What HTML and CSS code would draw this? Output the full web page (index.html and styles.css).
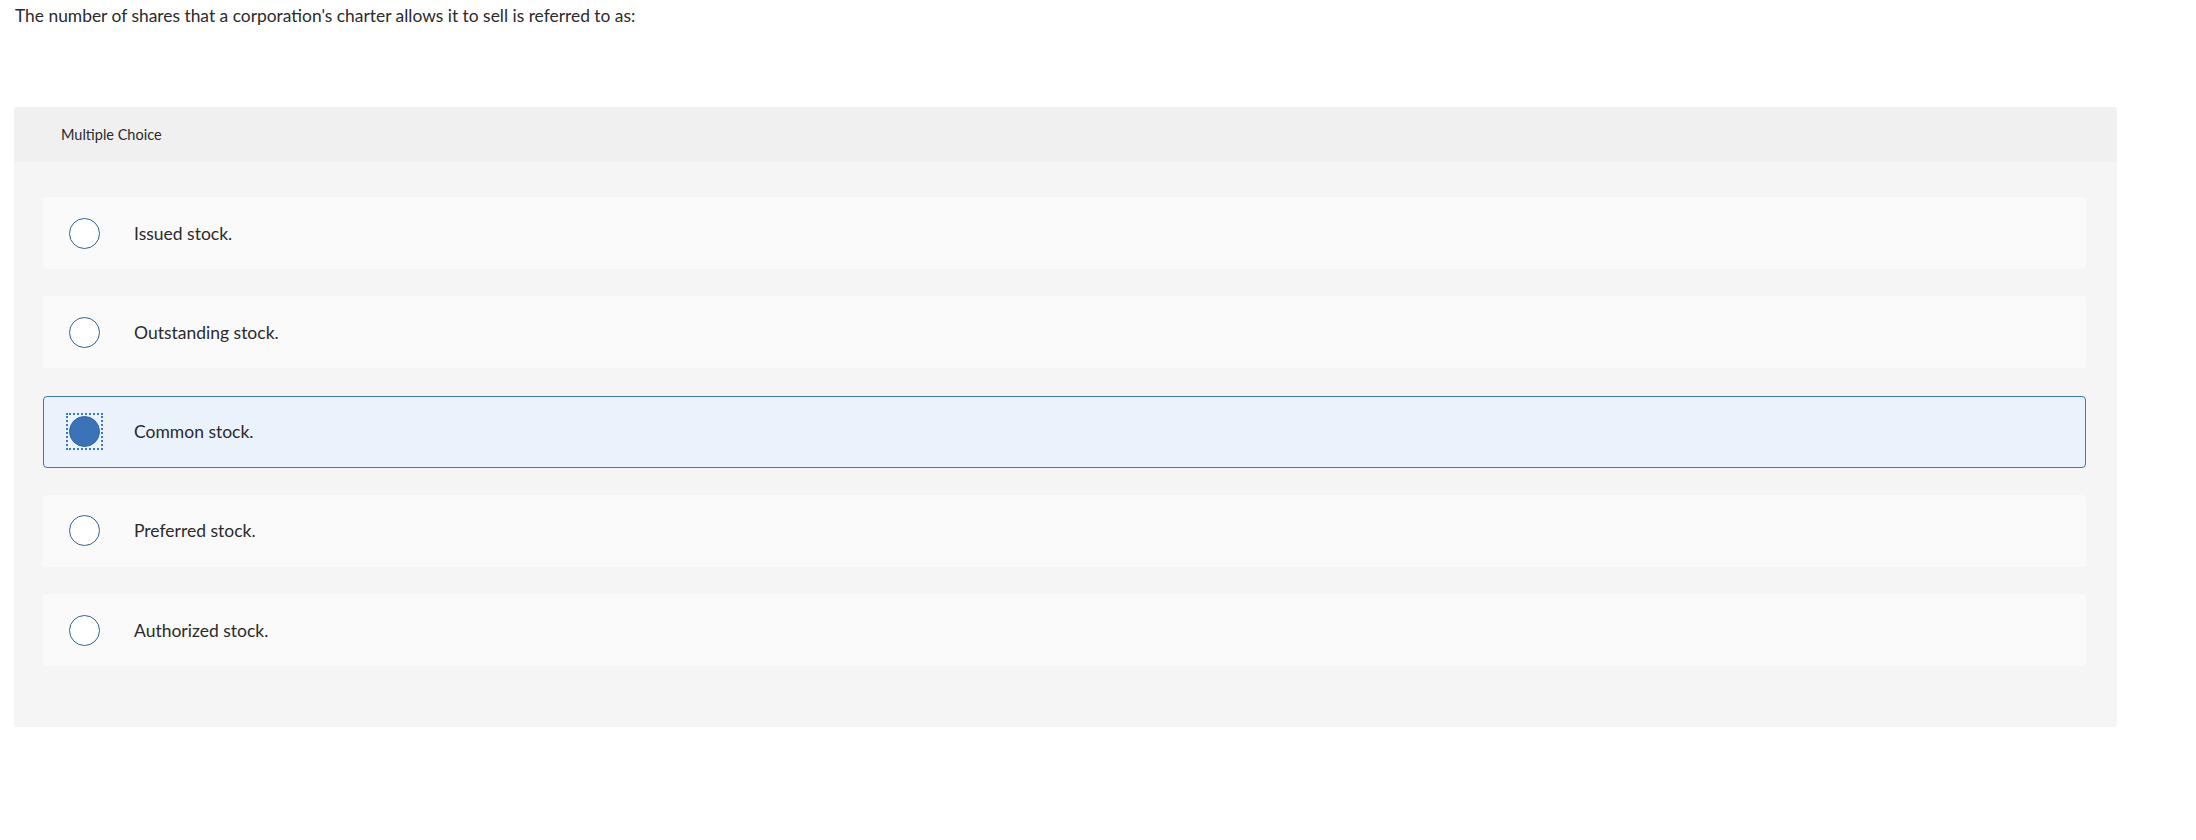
FILE: index.html
```html
<!DOCTYPE html>
<html>
<head>
<meta charset="utf-8">
<link rel="stylesheet" href="styles.css">
</head>
<body>
<p class="question">The number of shares that a corporation's charter allows it to sell is referred to as:</p>
<div class="panel">
  <div class="panel-header">Multiple Choice</div>
  <div class="panel-body">
    <div class="choice"><span class="radio-wrap"><span class="radio"></span></span><span class="label">Issued stock.</span></div>
    <div class="choice"><span class="radio-wrap"><span class="radio"></span></span><span class="label">Outstanding stock.</span></div>
    <div class="choice selected"><span class="radio-wrap focused"><span class="radio checked"></span></span><span class="label">Common stock.</span></div>
    <div class="choice"><span class="radio-wrap"><span class="radio"></span></span><span class="label">Preferred stock.</span></div>
    <div class="choice"><span class="radio-wrap"><span class="radio"></span></span><span class="label">Authorized stock.</span></div>
  </div>
</div>
</body>
</html>
```
FILE: styles.css
```css
html, body {
  margin: 0;
  padding: 0;
  background: #ffffff;
}
body {
  font-family: Lato, "Open Sans", sans-serif;
  color: #2b2b2b;
}
.question {
  margin: 0;
  padding: 2px 0 0 15px;
  font-size: 17.4px;
  line-height: 28px;
  height: 107px;
  box-sizing: border-box;
}
.panel {
  margin-left: 14px;
  width: 2103px;
  background: #f5f5f5;
  border-radius: 4px;
  overflow: hidden;
}
.panel-header {
  height: 55px;
  background: #f0f0f0;
  display: flex;
  align-items: center;
  padding-left: 47px;
  font-size: 14.5px;
}
.panel-body {
  padding: 35px 31px 61px 29px;
  display: flex;
  flex-direction: column;
  gap: 27.25px;
}
.choice {
  height: 72px;
  box-sizing: border-box;
  background: #fafafa;
  border-radius: 4px;
  display: flex;
  align-items: center;
  padding-left: 23px;
  font-size: 17.5px;
}
.choice.selected {
  background: #eaf2fb;
  border: 1px solid #3d78bd;
  padding-left: 22px;
}
.radio-wrap {
  display: flex;
  padding: 1px;
  border: 2px dotted transparent;
  flex: none;
}
.radio-wrap.focused {
  border-color: #3d78c4;
}
.radio {
  width: 31px;
  height: 31px;
  box-sizing: border-box;
  border: 1.5px solid #2f6296;
  border-radius: 50%;
  background: #ffffff;
}
.radio.checked {
  background: #3a74b6;
  border-color: #2f65a3;
}
.label {
  margin-left: 31px;
}
```
